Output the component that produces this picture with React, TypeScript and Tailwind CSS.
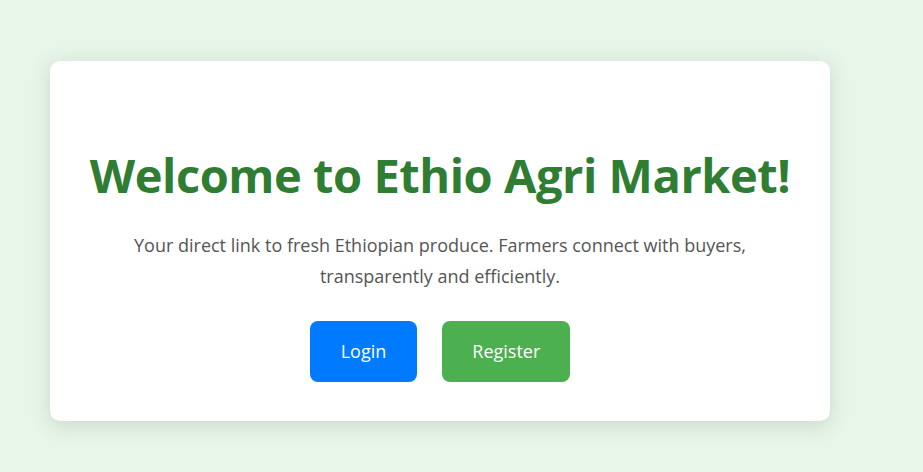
export default function App() {
  return (
    <div
      className="min-h-[472px] w-full bg-[#e8f5e9] pt-[61px] pl-[50px]"
      style={{ fontFamily: '"Open Sans", "Noto Sans", sans-serif' }}
    >
      <div className="flex h-[360px] w-[780px] flex-col items-center rounded-[10px] bg-white px-10 pt-[84px] shadow-[0_4px_20px_rgba(60,90,60,0.18)]">
        <h1 className="whitespace-nowrap text-center text-[47px] leading-[60px] font-bold tracking-[-0.45px] text-[#2e7d32]">
          Welcome to Ethio Agri Market!
        </h1>
        <p className="mt-[25px] w-[640px] text-center text-[18px] leading-[31px] text-[#555]">
          Your direct link to fresh Ethiopian produce. Farmers connect with buyers, transparently and efficiently.
        </p>
        <div className="mt-[29px] flex gap-[25px]">
          <button className="h-[61px] rounded-[8px] bg-[#007bff] px-[31px] text-[18px] text-white">
            Login
          </button>
          <button className="h-[61px] rounded-[8px] bg-[#4caf50] px-[30px] text-[18px] text-white">
            Register
          </button>
        </div>
      </div>
    </div>
  );
}
